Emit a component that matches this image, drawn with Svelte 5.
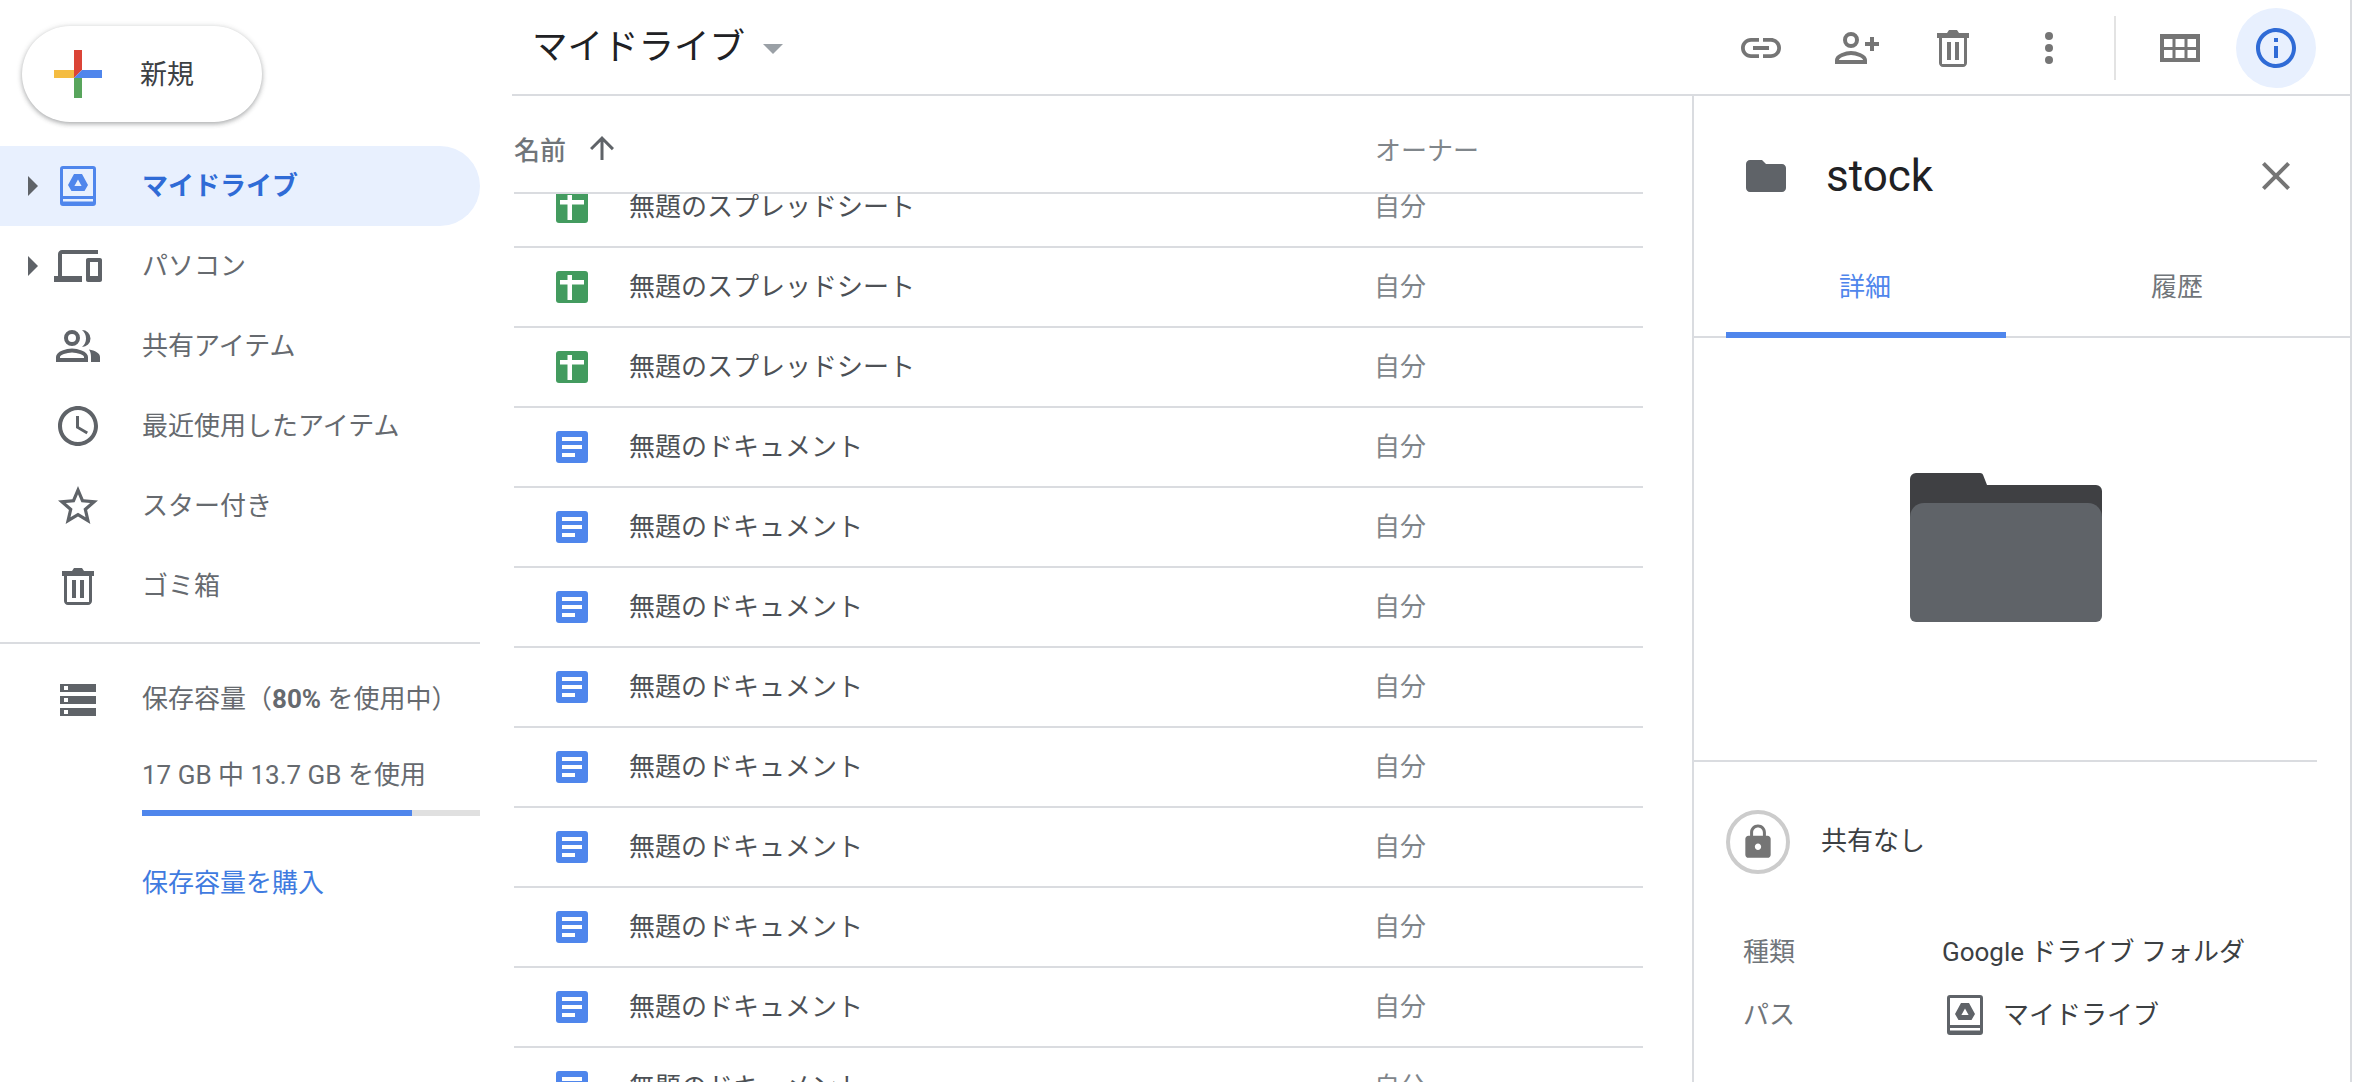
<script>
	// material style icon paths, 24 box
	const icons = {
		devices: "M4 6h18V4H4c-1.1 0-2 .9-2 2v11H0v3h14v-3H4V6zm19 2h-6c-.55 0-1 .45-1 1v10c0 .55.45 1 1 1h6c.55 0 1-.45 1-1V9c0-.55-.45-1-1-1zm-1 9h-4v-7h4v7z",
		clock: "M11.99 2C6.47 2 2 6.48 2 12s4.47 10 9.99 10C17.52 22 22 17.52 22 12S17.52 2 11.99 2zM12 20c-4.42 0-8-3.58-8-8s3.58-8 8-8 8 3.58 8 8-3.58 8-8 8zm.5-13H11v6l5.25 3.15.75-1.23-4.5-2.67z",
		star: "M22 9.24l-7.19-.62L12 2 9.19 8.63 2 9.24l5.46 4.73L5.82 21 12 17.27 18.18 21l-1.63-7.03L22 9.24zM12 15.4l-3.76 2.27 1-4.28-3.32-2.88 4.38-.38L12 6.1l1.71 4.04 4.38.38-3.32 2.88 1 4.28L12 15.4z",
		trash: "M4 4.5h5l1-1.5h4l1 1.5h5V7h-1v12.5c0 1.1-.9 2-2 2H7c-1.1 0-2-.9-2-2V7H4zM6.5 7v13h11V7zM9 9h2v9H9zM13 9h2v9h-2z",
		link: "M3.9 12c0-1.71 1.39-3.1 3.1-3.1h4V7H7c-2.76 0-5 2.24-5 5s2.24 5 5 5h4v-1.9H7c-1.71 0-3.1-1.39-3.1-3.1zM8 13h8v-2H8v2zm9-6h-4v1.9h4c1.71 0 3.1 1.39 3.1 3.1s-1.39 3.1-3.1 3.1h-4V17h4c2.76 0 5-2.24 5-5s-2.24-5-5-5z",
		info: "M11 7h2v2h-2zm0 4h2v6h-2zm1-9C6.48 2 2 6.48 2 12s4.48 10 10 10 10-4.48 10-10S17.52 2 12 2zm0 18c-4.41 0-8-3.59-8-8s3.59-8 8-8 8 3.59 8 8-3.59 8-8 8z",
		close: "M19 6.41L17.59 5 12 10.59 6.41 5 5 6.41 10.59 12 5 17.59 6.41 19 12 13.41 17.59 19 19 17.59 13.41 12z",
		folder: "M10 4H4c-1.1 0-2 .9-2 2v12c0 1.1.9 2 2 2h16c1.1 0 2-.9 2-2V8c0-1.1-.9-2-2-2h-8l-2-2z",
		up: "M4 12l1.41 1.41L11 7.83V20h2V7.83l5.58 5.59L20 12l-8-8-8 8z",
		lock: "M18 8h-1V6c0-2.76-2.24-5-5-5S7 3.24 7 6v2H6c-1.1 0-2 .9-2 2v10c0 1.1.9 2 2 2h12c1.1 0 2-.9 2-2V10c0-1.1-.9-2-2-2zm-6 9c-1.1 0-2-.9-2-2s.9-2 2-2 2 .9 2 2-.9 2-2 2zm3.1-9H8.9V6c0-1.71 1.39-3.1 3.1-3.1 1.71 0 3.1 1.39 3.1 3.1v2z"
	};

	const driveOutline = "M3 0h30a3 3 0 0 1 3 3v34a3 3 0 0 1-3 3H3a3 3 0 0 1-3-3V3a3 3 0 0 1 3-3zM3 3v27h30V3zM3 33v2.5h30V33zM14 8h8l6 11-3.5 6h-13L8 19zM18 13.5l-3.6 6.5h7.2z";

	const navItems = [
		{ label: "パソコン", icon: "devices", caret: true },
		{ label: "共有アイテム", icon: "people" },
		{ label: "最近使用したアイテム", icon: "clock" },
		{ label: "スター付き", icon: "star" },
		{ label: "ゴミ箱", icon: "trash" }
	];

	const files = [
		...Array(3).fill({ name: "無題のスプレッドシート", type: "sheet" }),
		...Array(9).fill({ name: "無題のドキュメント", type: "doc" })
	];
</script>

{#snippet peopleIcon()}
	<svg class="people" viewBox="0 0 44 32">
		<circle cx="16" cy="8" r="6" fill="none" stroke="currentColor" stroke-width="4" />
		<path d="M26 0a8.500 8.500 0 0 1 0 17a11 11 0 0 0 0-17z" fill="currentColor" />
		<path d="M2 30v-3c0-4 9-6.500 14-6.500s14 2.500 14 6.500v3z" fill="none" stroke="currentColor" stroke-width="4" />
		<path d="M33 19.500c6 1 11 3.500 11 7.500v5h-9v-5c0-3-.5-5-2-7.500z" fill="currentColor" />
	</svg>
{/snippet}

<div class="app">
	<aside class="sidebar">
		<button class="new-btn">
			<svg class="plus" viewBox="0 0 48 48">
				<path d="M20 0h8v20l-8 8z" fill="#db4437" />
				<path d="M0 20h20v8H0z" fill="#f4bc41" />
				<path d="M28 20h20v8H20z" fill="#4f86ec" />
				<path d="M20 28h8v20h-8z" fill="#58a55c" />
			</svg>
			<span class="label">新規</span>
		</button>

		<nav class="nav">
			<div class="nav-item active">
				<span class="caret"></span>
				<span class="nav-icon">
					<svg class="drive" viewBox="0 0 36 40"><path d={driveOutline} fill-rule="evenodd" fill="#4f86ec" /></svg>
				</span>
				<span class="label">マイドライブ</span>
			</div>
			{#each navItems as item}
				<div class="nav-item">
					<span class="caret" class:hidden={!item.caret}></span>
					<span class="nav-icon">
						{#if item.icon === "people"}
							{@render peopleIcon()}
						{:else}
							<svg class="ico" viewBox="0 0 24 24"><path d={icons[item.icon]} fill-rule="evenodd" /></svg>
						{/if}
					</span>
					<span class="label">{item.label}</span>
				</div>
			{/each}
		</nav>

		<div class="storage">
			<svg class="storage-icon" viewBox="0 0 36 32">
				<path d="M0 0h36v8H0zM0 12h36v8H0zM0 24h36v8H0z" fill="#5f6368" />
				<path d="M4 2h4v4H4zM4 14h4v4H4zM4 26h4v4H4z" fill="#fff" />
			</svg>
			<div class="storage-body">
				<div class="storage-title">保存容量（<b>80%</b> を使用中）</div>
				<div class="storage-used">17 GB 中 13.7 GB を使用</div>
				<div class="bar"><div class="bar-fill" style="width: 80%"></div></div>
				<div class="buy">保存容量を購入</div>
			</div>
		</div>
	</aside>

	<main class="main">
		<header class="topbar">
			<div class="crumb">
				<span>マイドライブ</span>
				<span class="crumb-arrow"></span>
			</div>
			<div class="actions">
				<span class="action"><svg class="ico" viewBox="0 0 24 24"><path d={icons.link} /></svg></span>
				<span class="action">
					<svg class="person-add" viewBox="0 0 44 32">
						<circle cx="16" cy="8" r="6" fill="none" stroke="currentColor" stroke-width="4" />
						<path d="M2 30v-2c0-4 9-7 14-7s14 3 14 7v2z" fill="none" stroke="currentColor" stroke-width="4" />
						<path d="M35 5h4v5h5v4h-5v5h-4v-5h-5v-4h5z" fill="currentColor" />
					</svg>
				</span>
				<span class="action"><svg class="ico" viewBox="0 0 24 24"><path d={icons.trash} fill-rule="evenodd" /></svg></span>
				<span class="action">
					<svg class="more" viewBox="0 0 8 32"><circle cx="4" cy="4" r="4" /><circle cx="4" cy="16" r="4" /><circle cx="4" cy="28" r="4" /></svg>
				</span>
				<span class="divider"></span>
				<span class="action grid-btn">
					<svg class="grid-icon" viewBox="0 0 40 28">
						<path d="M0 0h40v28H0zM4 5v8h8.500V5zM15.500 5v8h9V5zM27.500 5v8H36V5zM4 16v8h8.500v-8zM15.500 16v8h9v-8zM27.500 16v8H36v-8z" fill-rule="evenodd" />
					</svg>
				</span>
				<span class="info-btn"><svg class="ico" viewBox="0 0 24 24"><path d={icons.info} /></svg></span>
			</div>
		</header>

		<div class="content">
			<section class="list">
				<div class="list-head">
					<div class="col-name">
						<span>名前</span>
						<svg class="sort" viewBox="0 0 24 24"><path d={icons.up} /></svg>
					</div>
					<div class="col-owner">オーナー</div>
				</div>
				<div class="rows">
					<div class="rows-inner">
						{#each files as file}
							<div class="row">
								<div class="row-name">
									{#if file.type === "sheet"}
										<svg class="file-icon" viewBox="0 0 32 32">
											<rect width="32" height="32" rx="3" fill="#439b5f" />
											<path d="M11.500 4h4.500v5h12v4.500H16V29h-4.500V13.500H4V9h7.500z" fill="#fff" />
										</svg>
									{:else}
										<svg class="file-icon" viewBox="0 0 32 32">
											<rect width="32" height="32" rx="3" fill="#4f86ec" />
											<path d="M6 6h20v4H6zM6 14h20v4H6zM6 22h13v4H6z" fill="#fff" />
										</svg>
									{/if}
									<span class="label">{file.name}</span>
								</div>
								<div class="row-owner label">自分</div>
							</div>
						{/each}
					</div>
				</div>
			</section>

			<aside class="panel">
				<div class="panel-head">
					<svg class="ico panel-folder" viewBox="0 0 24 24"><path d={icons.folder} /></svg>
					<span class="panel-title">stock</span>
					<svg class="ico panel-close" viewBox="0 0 24 24"><path d={icons.close} /></svg>
				</div>

				<div class="tabs">
					<div class="tab active">詳細</div>
					<div class="tab other">履歴</div>
				</div>

				<div class="preview">
					<svg class="big-folder" viewBox="0 0 192 149">
						<path d="M6 0h64c2 0 3 1 3.500 3L77 12h109a6 6 0 0 1 6 6v40H0V6a6 6 0 0 1 6-6z" fill="#3f4043" />
						<path d="M14 30h164a14 14 0 0 1 14 14v99a6 6 0 0 1-6 6H6a6 6 0 0 1-6-6V44a14 14 0 0 1 14-14z" fill="#5f6368" />
					</svg>
				</div>

				<div class="share">
					<span class="lock-ring"><svg class="lock" viewBox="0 0 24 24"><path d={icons.lock} /></svg></span>
					<span class="share-text">共有なし</span>
				</div>

				<div class="details">
					<div class="key">種類</div>
					<div class="val">Google ドライブ フォルダ</div>
					<div class="key">パス</div>
					<div class="val path">
						<svg class="drive" viewBox="0 0 36 40"><path d={driveOutline} fill-rule="evenodd" fill="#5f6368" /></svg>
						<span>マイドライブ</span>
					</div>
				</div>
			</aside>
		</div>
	</main>
</div>

<style>
	:global(body) {
		margin: 0;
		background: #fff;
	}

	.app {
		display: flex;
		width: 2360px;
		height: 1082px;
		overflow: hidden;
		font-family: Roboto, "Noto Sans CJK JP", sans-serif;
		font-size: 26px;
		color: #666a6f;
	}

	svg {
		display: block;
		flex: none;
	}

	.ico {
		width: 48px;
		height: 48px;
		fill: currentColor;
	}

	/* noto sits lower than the original face */
	.label {
		padding-bottom: 6px;
	}

	/* sidebar */
	.sidebar {
		width: 512px;
		flex: none;
		padding-top: 26px;
		box-sizing: border-box;
	}

	.new-btn {
		display: flex;
		align-items: center;
		width: 240px;
		height: 96px;
		margin-left: 22px;
		padding: 0 0 0 32px;
		border: none;
		border-radius: 48px;
		background: #fff;
		box-shadow: 0 2px 4px rgba(60, 64, 67, 0.3), 0 1px 6px rgba(60, 64, 67, 0.2);
		font: inherit;
		font-size: 27px;
		color: #3c4043;
	}

	.new-btn .label {
		padding-bottom: 3px;
	}

	.plus {
		width: 48px;
		height: 48px;
		margin-right: 38px;
	}

	.nav {
		width: 480px;
		margin-top: 24px;
	}

	.nav-item {
		display: flex;
		align-items: center;
		height: 80px;
		padding-left: 28px;
		border-radius: 0 40px 40px 0;
	}

	.nav-item.active {
		background: #e8f0fe;
		color: #2f6bd6;
		font-weight: 700;
	}

	.caret {
		width: 0;
		height: 0;
		border-left: 10px solid #5f6368;
		border-top: 10px solid transparent;
		border-bottom: 10px solid transparent;
		margin-right: 16px;
	}

	.caret.hidden {
		visibility: hidden;
	}

	.nav-icon {
		display: flex;
		align-items: center;
		justify-content: center;
		width: 48px;
		height: 48px;
		margin-right: 40px;
		color: #5f6368;
	}

	.drive {
		width: 36px;
		height: 40px;
	}

	.people {
		width: 44px;
		height: 32px;
	}

	.storage {
		display: flex;
		width: 480px;
		margin-top: 16px;
		border-top: 2px solid #dadce0;
	}

	.storage-icon {
		width: 36px;
		height: 32px;
		margin: 40px 46px 0 60px;
	}

	.storage-body {
		flex: 1;
	}

	.storage-title {
		margin-top: 35px;
		line-height: 40px;
	}

	.storage-title b {
		font-weight: 700;
	}

	.storage-used {
		margin-top: 36px;
		line-height: 40px;
	}

	.bar {
		height: 6px;
		margin-top: 15px;
		background: #e0e0e0;
	}

	.bar-fill {
		height: 100%;
		background: #4f86ec;
	}

	.buy {
		margin-top: 47px;
		line-height: 40px;
		color: #3f7be0;
	}

	/* main */
	.main {
		display: flex;
		flex-direction: column;
		width: 1838px;
		flex: none;
		border-right: 2px solid #dadce0;
	}

	.topbar {
		display: flex;
		align-items: center;
		justify-content: space-between;
		height: 96px;
		flex: none;
		box-sizing: border-box;
		border-bottom: 2px solid #dadce0;
	}

	.crumb {
		display: flex;
		align-items: center;
		padding: 0 0 8px 20px;
		font-size: 35.5px;
		color: #202124;
	}

	.crumb-arrow {
		width: 0;
		height: 0;
		margin: 11px 0 0 18px;
		border-top: 10px solid #9aa0a6;
		border-left: 10px solid transparent;
		border-right: 10px solid transparent;
	}

	.actions {
		display: flex;
		align-items: center;
		height: 94px;
		padding-right: 34px;
		padding-top: 2px;
		box-sizing: border-box;
		color: #757575;
	}

	.action {
		display: flex;
		align-items: center;
		justify-content: center;
		width: 96px;
		height: 48px;
	}

	.person-add {
		width: 44px;
		height: 32px;
	}

	.more {
		width: 8px;
		height: 32px;
		fill: currentColor;
	}

	.divider {
		width: 2px;
		height: 64px;
		margin: 0 16px 0 17px;
		background: #e3e3e3;
	}

	.grid-icon {
		width: 40px;
		height: 28px;
		fill: currentColor;
	}

	.info-btn {
		display: flex;
		align-items: center;
		justify-content: center;
		width: 80px;
		height: 80px;
		margin-left: 8px;
		border-radius: 50%;
		background: #e8f0fe;
		color: #2f6bd6;
	}

	.content {
		display: flex;
		flex: 1;
		min-height: 0;
	}

	/* file list */
	.list {
		display: flex;
		flex-direction: column;
		width: 1180px;
		flex: none;
		padding-left: 2px;
		box-sizing: border-box;
	}

	.list-head {
		display: flex;
		width: 1129px;
		height: 98px;
		flex: none;
		align-items: center;
		box-sizing: border-box;
		border-bottom: 2px solid #dadce0;
		padding-top: 8px;
	}

	.col-name {
		display: flex;
		align-items: center;
		width: 861px;
		font-weight: 500;
		color: #70757a;
	}

	.sort {
		width: 36px;
		height: 36px;
		margin-left: 18px;
		fill: #5f6368;
	}

	.col-owner {
		color: #80868b;
	}

	.rows {
		flex: 1;
		overflow: hidden;
	}

	/* list is scrolled a little */
	.rows-inner {
		margin-top: -26px;
	}

	.row {
		display: flex;
		align-items: center;
		width: 1129px;
		height: 80px;
		box-sizing: border-box;
		border-bottom: 2px solid #dadce0;
	}

	.row-name {
		display: flex;
		align-items: center;
		width: 860px;
		padding-left: 42px;
		box-sizing: border-box;
		color: #4d5156;
	}

	.file-icon {
		width: 32px;
		height: 32px;
		margin-right: 41px;
	}

	.row-owner {
		color: #80868b;
	}

	/* details panel */
	.panel {
		flex: 1;
		border-left: 2px solid #dadce0;
	}

	.panel-head {
		display: flex;
		align-items: center;
		padding: 56px 50px 0 48px;
	}

	.panel-folder {
		color: #5f6368;
	}

	.panel-title {
		flex: 1;
		margin-left: 36px;
		font-size: 44px;
		line-height: 46px;
		color: #202124;
	}

	.panel-close {
		color: #757575;
	}

	.tabs {
		display: flex;
		height: 98px;
		margin-top: 40px;
		padding-left: 32px;
		box-sizing: border-box;
		border-bottom: 2px solid #dadce0;
	}

	.tab {
		height: 98px;
		padding: 27px 2px 0 0;
		box-sizing: border-box;
		line-height: 40px;
		text-align: center;
		color: #70757a;
	}

	.tab.active {
		width: 280px;
		border-bottom: 6px solid #4f86ec;
		color: #4f86ec;
	}

	.tab.other {
		flex: 1;
	}

	.preview {
		height: 424px;
		margin-right: 33px;
		padding-top: 135px;
		box-sizing: border-box;
		border-bottom: 2px solid #dadce0;
	}

	.big-folder {
		width: 192px;
		height: 149px;
		margin: 0 auto;
	}

	.share {
		display: flex;
		align-items: center;
		gap: 31px;
		margin: 48px 0 0 32px;
		color: #3c4043;
	}

	.share-text {
		padding-bottom: 8px;
	}

	.lock-ring {
		display: flex;
		align-items: center;
		justify-content: center;
		width: 64px;
		height: 64px;
		box-sizing: border-box;
		border: 4px solid #ccc;
		border-radius: 50%;
	}

	.lock {
		width: 38px;
		height: 38px;
		fill: #757575;
	}

	.details {
		display: grid;
		grid-template-columns: 199px 1fr;
		row-gap: 23px;
		align-items: center;
		margin: 58px 0 0 49px;
		line-height: 40px;
	}

	.key {
		color: #70757a;
	}

	.val {
		color: #3c4043;
	}

	.path {
		display: flex;
		align-items: center;
		gap: 20px;
		padding-left: 5px;
	}
</style>
